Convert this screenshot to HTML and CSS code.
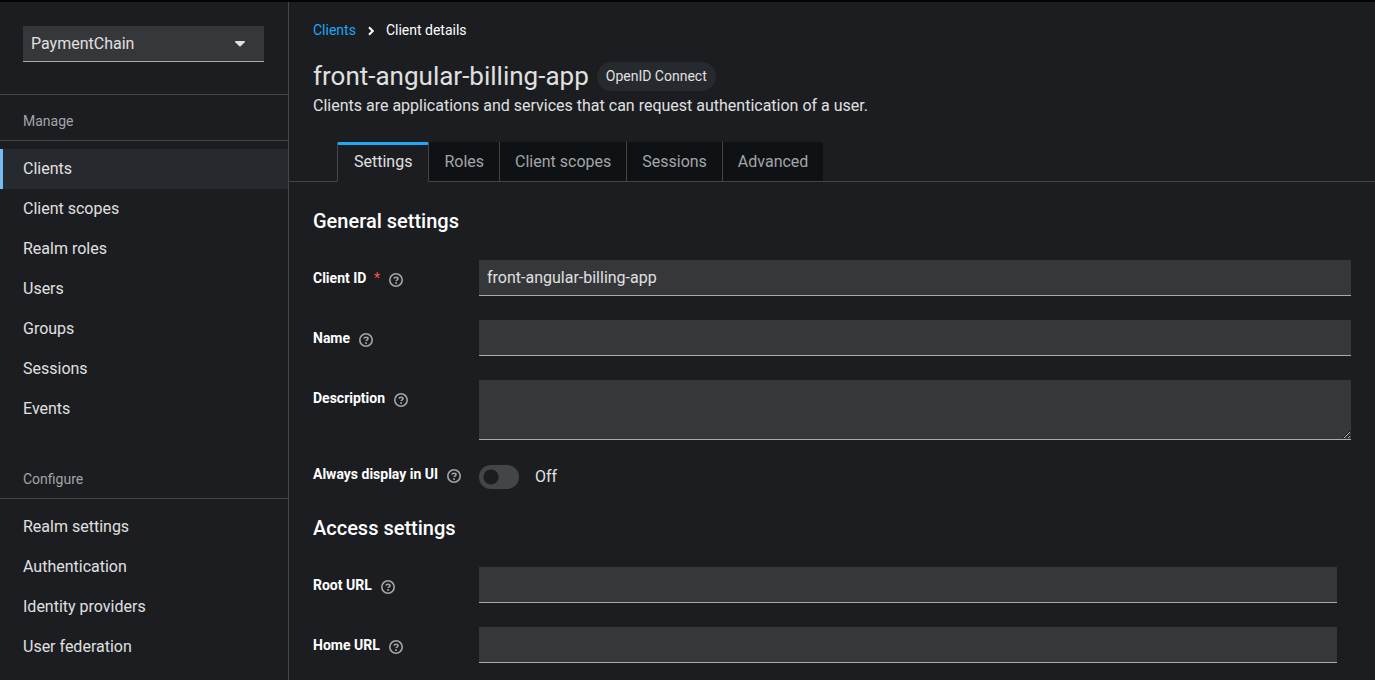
FILE: index.html
```html
<!DOCTYPE html>
<html lang="en">
<head>
<meta charset="utf-8">
<meta name="viewport" content="width=device-width, initial-scale=1">
<title>Client details</title>
<link rel="stylesheet" href="styles.css">
</head>
<body>
<svg class="defs" aria-hidden="true">
  <symbol id="help" viewBox="0 0 14 14">
    <circle cx="7" cy="7" r="6.200" fill="none" stroke="currentColor" stroke-width="1.600"/>
    <path d="M5 5.700C5.200 4.600 6 4.200 7 4.200c1.200 0 2 .7 2 1.600 0 1.300-1.900 1.300-1.900 2.300" fill="none" stroke="currentColor" stroke-width="1.600"/>
    <circle cx="7.050" cy="9.900" r="1" fill="currentColor"/>
  </symbol>
</svg>
<div class="page">
  <aside class="sidebar">
    <div class="realm">
      <select class="realm-select" aria-label="Realm"><option>PaymentChain</option></select>
      <svg class="realm-caret" viewBox="0 0 10 6" aria-hidden="true"><path d="M.8 0h8.400c.8 0 1 .7.500 1.200L5.700 5.200q-.7.600-1.400 0L.3 1.200C-.2.700 0 0 .8 0z" fill="currentColor"/></svg>
    </div>
    <nav class="nav" aria-label="Manage">
      <h2 class="nav-title">Manage</h2>
      <ul class="nav-list">
        <li><a class="nav-link nav-link-current" href="#clients" aria-current="page">Clients</a></li>
        <li><a class="nav-link" href="#client-scopes">Client scopes</a></li>
        <li><a class="nav-link" href="#realm-roles">Realm roles</a></li>
        <li><a class="nav-link" href="#users">Users</a></li>
        <li><a class="nav-link" href="#groups">Groups</a></li>
        <li><a class="nav-link" href="#sessions">Sessions</a></li>
        <li><a class="nav-link" href="#events">Events</a></li>
      </ul>
    </nav>
    <nav class="nav" aria-label="Configure">
      <h2 class="nav-title">Configure</h2>
      <ul class="nav-list">
        <li><a class="nav-link" href="#realm-settings">Realm settings</a></li>
        <li><a class="nav-link" href="#authentication">Authentication</a></li>
        <li><a class="nav-link" href="#identity-providers">Identity providers</a></li>
        <li><a class="nav-link" href="#user-federation">User federation</a></li>
      </ul>
    </nav>
  </aside>
  <main class="main">
    <header class="header">
      <nav class="breadcrumb" aria-label="Breadcrumb">
        <a class="breadcrumb-link" href="#clients">Clients</a>
        <svg class="breadcrumb-arrow" viewBox="0 0 6 10" aria-hidden="true"><path d="M1 1.200 4.800 5 1 8.800" fill="none" stroke="currentColor" stroke-width="2"/></svg>
        <span>Client details</span>
      </nav>
      <div class="title-row">
        <h1 class="title">front-angular-billing-app</h1>
        <span class="badge">OpenID Connect</span>
      </div>
      <p class="subtitle">Clients are applications and services that can request authentication of a user.</p>
    </header>
    <div class="tabs" role="tablist">
      <button class="tab tab-current" role="tab" aria-selected="true">Settings</button>
      <button class="tab" role="tab" aria-selected="false">Roles</button>
      <button class="tab" role="tab" aria-selected="false">Client scopes</button>
      <button class="tab" role="tab" aria-selected="false">Sessions</button>
      <button class="tab" role="tab" aria-selected="false">Advanced</button>
    </div>
    <form class="content">
      <section class="section">
        <h2 class="section-title">General settings</h2>
        <div class="field">
          <div class="label-cell"><label for="client-id">Client ID <span class="required">*</span></label><button class="help" type="button" aria-label="Help for Client ID"><svg class="help-icon"><use href="#help"/></svg></button></div>
          <input class="control" id="client-id" type="text" value="front-angular-billing-app" required>
        </div>
        <div class="field">
          <div class="label-cell"><label for="name">Name</label><button class="help" type="button" aria-label="Help for Name"><svg class="help-icon"><use href="#help"/></svg></button></div>
          <input class="control" id="name" type="text">
        </div>
        <div class="field">
          <div class="label-cell"><label for="description">Description</label><button class="help" type="button" aria-label="Help for Description"><svg class="help-icon"><use href="#help"/></svg></button></div>
          <textarea class="control control-area" id="description"></textarea>
        </div>
        <div class="field">
          <div class="label-cell label-cell-switch"><label for="always-display">Always display in UI</label><button class="help" type="button" aria-label="Help for Always display in UI"><svg class="help-icon"><use href="#help"/></svg></button></div>
          <div class="switch-row"><input class="switch" id="always-display" type="checkbox" role="switch"><span>Off</span></div>
        </div>
      </section>
      <section class="section section-inset">
        <h2 class="section-title">Access settings</h2>
        <div class="field">
          <div class="label-cell"><label for="root-url">Root URL</label><button class="help" type="button" aria-label="Help for Root URL"><svg class="help-icon"><use href="#help"/></svg></button></div>
          <input class="control" id="root-url" type="text">
        </div>
        <div class="field">
          <div class="label-cell"><label for="home-url">Home URL</label><button class="help" type="button" aria-label="Help for Home URL"><svg class="help-icon"><use href="#help"/></svg></button></div>
          <input class="control" id="home-url" type="text">
        </div>
      </section>
    </form>
  </main>
</div>
</body>
</html>
```
FILE: styles.css
```css
* { box-sizing: border-box; }
body {
  margin: 0;
  background: #1b1d21;
  color: #e0e0e0;
  font: 16px/24px Roboto, sans-serif;
}
h1, h2, p, ul { margin: 0; padding: 0; font-weight: 400; }
ul { list-style: none; }
a { text-decoration: none; }
button, input, select, textarea { font: inherit; color: inherit; }
.defs { display: none; }
.page {
  display: grid;
  grid-template-columns: 289px 1fr;
  min-height: 100vh;
  border-top: 2px solid #030303;
}
.sidebar { border-right: 1px solid #444548; }
.realm {
  position: relative;
  padding: 24px 24px 32px 23px;
  border-bottom: 1px solid #444548;
}
.realm-select {
  display: block;
  width: 100%;
  height: 36px;
  padding: 0 8px;
  border: 0;
  border-bottom: 1px solid #aaabac;
  border-radius: 0;
  background: #36373a;
  appearance: none;
}
.realm-caret {
  position: absolute;
  top: 39px;
  right: 43px;
  width: 10px;
  height: 6px;
  pointer-events: none;
}
.nav { margin-bottom: 24px; }
.nav-title {
  padding: 16px 24px 8px 23px;
  border-bottom: 1px solid #444548;
  color: #a3a5a8;
  font-size: 14px;
  line-height: 21px;
}
.nav-list { padding-top: 8px; }
.nav-link {
  display: block;
  padding: 8px 20px;
  border-left: 3px solid transparent;
  color: #e0e0e0;
}
.nav-link-current { border-left-color: #73bcf7; background: #26292d; }
.main { min-width: 0; }
.header { padding: 18px 24px 24px; }
.breadcrumb {
  display: flex;
  align-items: center;
  gap: 12px;
  color: #fff;
  font-size: 14px;
  line-height: 21px;
}
.breadcrumb-link { color: #1fa7f8; }
.breadcrumb-arrow { width: 6px; height: 10px; }
.title-row {
  display: flex;
  align-items: center;
  gap: 8px;
  margin-top: 19px;
}
.title { font-size: 26px; line-height: 32px; }
.badge {
  padding: 4px 9px;
  border-radius: 16px;
  background: #26292d;
  font-size: 14px;
  line-height: 21px;
}
.subtitle { margin-top: 2px; }
.tabs {
  display: flex;
  padding-left: 48px;
  box-shadow: inset 0 -1px #444548;
}
.tab {
  height: 40px;
  padding: 0 15px;
  border: 0;
  border-right: 1px solid #444548;
  border-bottom: 1px solid #444548;
  background: #0f1214;
  color: #a3a5a8;
}
.tab:last-child { border-right: 0; }
.tab-current {
  padding: 0 16px;
  border-left: 1px solid #444548;
  border-bottom-color: #1b1d21;
  background: #1b1d21;
  box-shadow: inset 0 3px #1fa7f8;
  color: #e0e0e0;
}
.content { display: grid; gap: 24px; padding: 24px 24px 16px; }
.section { display: grid; gap: 24px; }
.section-inset { padding-right: 14px; }
.section-title { color: #fff; font-size: 20px; line-height: 30px; font-weight: 500; }
.field { display: grid; grid-template-columns: 150px 1fr; column-gap: 16px; }
.label-cell {
  display: flex;
  align-items: flex-start;
  gap: 9px;
  padding-top: 8px;
  color: #fff;
  font-size: 14px;
  line-height: 21px;
  font-weight: 700;
  white-space: nowrap;
}
.label-cell-switch { padding-top: 0; }
.required { margin-left: 4px; color: #fe5142; font-weight: 400; }
.help {
  display: flex;
  padding: 5px 0 0;
  border: 0;
  background: none;
  color: #a3a5a8;
}
.help-icon { width: 14px; height: 14px; }
.control {
  display: block;
  width: 100%;
  height: 36px;
  padding: 0 8px;
  border: 0;
  border-bottom: 1px solid #aaabac;
  border-radius: 0;
  background: #36373a;
}
.control-area { height: 60px; resize: vertical; }
.switch-row { display: flex; align-items: center; gap: 16px; padding-top: 1px; }
.switch {
  width: 40px;
  height: 24px;
  margin: 0;
  border-radius: 12px;
  background: radial-gradient(circle at 12px 12px, #1b1d21 7px, #444548 8px);
  appearance: none;
}
```
